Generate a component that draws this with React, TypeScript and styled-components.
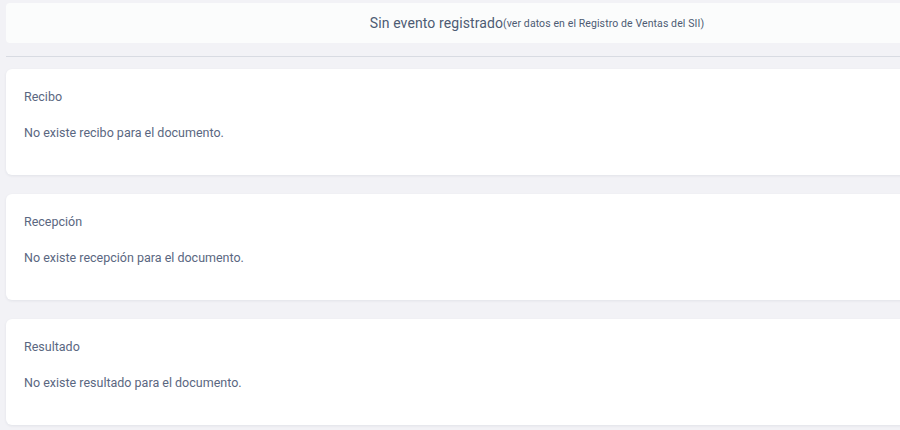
import React from "react";
import styled, { createGlobalStyle } from "styled-components";

const Global = createGlobalStyle`
  html, body { margin: 0; padding: 0; background: #f2f2f6; overflow: hidden; }
  body { font-family: Roboto, "Noto Sans", sans-serif; }
`;

const Viewport = styled.div`
  width: 100vw;
  height: 100vh;
  overflow: hidden;
`;

const Page = styled.div`
  width: 1062px;
  padding: 3px 0 0 6px;
  display: flex;
  flex-direction: column;
`;

const Banner = styled.div`
  height: 40px;
  background: #fbfcfc;
  border-radius: 4px;
  display: flex;
  align-items: center;
  justify-content: center;
  color: #4d5b73;
`;

const BannerMain = styled.span`
  font-size: 14px;
  letter-spacing: 0.1px;
`;

const BannerNote = styled.span`
  font-size: 10.5px;
  letter-spacing: 0.1px;
`;

const Divider = styled.hr`
  border: none;
  border-top: 1px solid #d8dbe2;
  margin: 13px 0 12px 0;
  height: 0;
`;

const Cards = styled.div`
  display: flex;
  flex-direction: column;
  gap: 19px;
`;

const Card = styled.section`
  background: #ffffff;
  border-radius: 6px;
  box-shadow: 0 1px 3px rgba(40, 50, 80, 0.08);
  padding: 19px 18px 33px;
  color: #5a6781;
  font-size: 12.5px;
`;

const CardTitle = styled.div`
  line-height: 18px;
  margin-bottom: 18px;
`;

const CardBody = styled.div`
  line-height: 18px;
`;

const sections = [
  { title: "Recibo", body: "No existe recibo para el documento." },
  { title: "Recepción", body: "No existe recepción para el documento." },
  { title: "Resultado", body: "No existe resultado para el documento." },
];

export default function App() {
  return (
    <>
      <Global />
      <Viewport>
        <Page>
          <Banner>
            <BannerMain>Sin evento registrado</BannerMain>
            <BannerNote>(ver datos en el Registro de Ventas del SII)</BannerNote>
          </Banner>
          <Divider />
          <Cards>
            {sections.map((s) => (
              <Card key={s.title}>
                <CardTitle>{s.title}</CardTitle>
                <CardBody>{s.body}</CardBody>
              </Card>
            ))}
          </Cards>
        </Page>
      </Viewport>
    </>
  );
}
